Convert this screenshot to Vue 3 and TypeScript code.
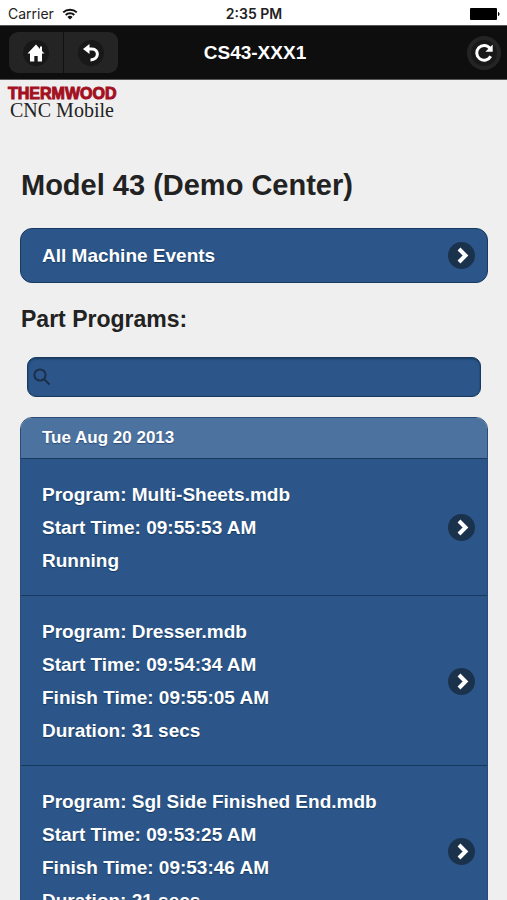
<script setup lang="ts">
import { ref, computed } from 'vue'

interface ProgramRun {
  id: number
  lines: string[]
}

const query = ref('')

const runs: ProgramRun[] = [
  { id: 1, lines: ['Program: Multi-Sheets.mdb', 'Start Time: 09:55:53 AM', 'Running'] },
  {
    id: 2,
    lines: [
      'Program: Dresser.mdb',
      'Start Time: 09:54:34 AM',
      'Finish Time: 09:55:05 AM',
      'Duration: 31 secs',
    ],
  },
  {
    id: 3,
    lines: [
      'Program: Sgl Side Finished End.mdb',
      'Start Time: 09:53:25 AM',
      'Finish Time: 09:53:46 AM',
      'Duration: 21 secs',
    ],
  },
]

const visibleRuns = computed(() => {
  const needle = query.value.trim().toLowerCase()
  return runs.filter((run) => run.lines.join(' ').toLowerCase().includes(needle))
})
</script>

<template>
  <div class="app">
    <div class="status">
      <div class="carrier">
        <span>Carrier</span>
        <svg class="wifi" viewBox="0 0 16 12" aria-hidden="true">
          <path d="M1.2 4.4a9.8 9.8 0 0 1 13.6 0M3.7 7a6.2 6.2 0 0 1 8.6 0" />
          <path class="solid" d="M8 11.6 5.4 9a3.8 3.8 0 0 1 5.2 0z" />
        </svg>
      </div>
      <strong class="clock">2:35 PM</strong>
      <svg class="battery" viewBox="0 0 30 12" aria-hidden="true">
        <rect x="0" y="0" width="27" height="12" rx="1" />
        <path d="M28 4c2 .6 2 3.400 0 4z" />
      </svg>
    </div>

    <header class="bar">
      <div class="group">
        <button type="button" class="nav" aria-label="Home">
          <span class="disc">
            <svg viewBox="0 0 26 26" aria-hidden="true">
              <path class="fill" d="M13 4.500 4.500 13.600H7V21.500h4.300V16h3.400v5.500H19v-7.900h2.500L19 11V6.500h-2V9z" />
            </svg>
          </span>
        </button>
        <button type="button" class="nav" aria-label="Back">
          <span class="disc">
            <svg viewBox="0 0 26 26" aria-hidden="true">
              <path class="fill" d="M5 9 11.500 4v10z" />
              <path class="line" d="M9.500 9h4.500c7.400 0 7.400 10.800-1.500 11" />
            </svg>
          </span>
        </button>
      </div>
      <h1 class="title">CS43-XXX1</h1>
      <button type="button" class="refresh" aria-label="Refresh">
        <svg viewBox="0 0 26 26" aria-hidden="true">
          <path class="line" d="M18.900 8.200A7.400 7.400 0 1 0 19.700 16.300" />
          <path class="fill" d="M21.700 4.500v7.300h-7.300z" />
        </svg>
      </button>
    </header>

    <main class="content">
      <div class="logo">
        <span class="brand">THERMWOOD</span>
        <span class="product">CNC Mobile</span>
      </div>

      <div class="body">
        <h2 class="machine">Model 43 (Demo Center)</h2>

        <a href="#events" class="row events">
          <span>All Machine Events</span>
          <svg class="arrow" viewBox="0 0 27 27" aria-hidden="true">
            <circle cx="13.500" cy="13.500" r="13.500" />
            <path d="m11 7 6.500 6.500-6.500 6.500" />
          </svg>
        </a>

        <h3 class="section">Part Programs:</h3>

        <label class="search">
          <svg viewBox="0 0 18 18" aria-hidden="true">
            <circle cx="7" cy="7" r="5.600" />
            <path d="m11 11 5.500 5.500" />
          </svg>
          <input v-model="query" type="search" aria-label="Filter programs" />
        </label>

        <section class="list">
          <h4 class="date">Tue Aug 20 2013</h4>
          <a v-for="run in visibleRuns" :key="run.id" href="#program" class="row">
            <span class="lines">
              <span v-for="line in run.lines" :key="line">{{ line }}</span>
            </span>
            <svg class="arrow" viewBox="0 0 27 27" aria-hidden="true">
              <circle cx="13.500" cy="13.500" r="13.500" />
              <path d="m11 7 6.500 6.500-6.500 6.500" />
            </svg>
          </a>
        </section>
      </div>
    </main>
  </div>
</template>

<style>
body {
  margin: 0;
  background: #efefef;
}
</style>

<style scoped>
.app {
  display: flex;
  flex-direction: column;
  height: 100vh;
  background: #efefef;
  color: #222;
  font-family: "Liberation Sans", Arial, sans-serif;
}

.status {
  display: grid;
  grid-template-columns: 1fr auto 1fr;
  align-items: center;
  flex: none;
  height: 25px;
  padding: 2px 7px 0 8px;
  box-sizing: border-box;
  background: #fff;
  color: #222;
  font: 14px "Inter", sans-serif;
}

.carrier {
  display: flex;
  align-items: center;
  gap: 8px;
}

.clock {
  font-weight: 600;
}

.wifi {
  width: 16px;
  height: 12px;
  fill: none;
  stroke: #111;
  stroke-width: 2;
}

.wifi .solid {
  fill: #111;
  stroke: none;
}

.battery {
  justify-self: end;
  width: 30px;
  height: 12px;
}

.bar {
  display: grid;
  grid-template-columns: 1fr auto 1fr;
  align-items: center;
  flex: none;
  height: 55px;
  padding: 0 6px 0 9px;
  box-sizing: border-box;
  border-top: 1px solid #555;
  border-bottom: 1px solid #555;
  background: #0e0e0e;
  color: #fff;
}

.group {
  display: flex;
  justify-self: start;
  overflow: hidden;
  border-radius: 9px;
  background: #242424;
}

.nav {
  display: grid;
  place-items: center;
  width: 54px;
  height: 41px;
  padding: 0;
  border: 0;
  background: transparent;
}

.nav + .nav {
  width: 55px;
  border-left: 1px solid #111;
}

.disc {
  display: grid;
  width: 26px;
  height: 26px;
  border-radius: 50%;
  background: #181818;
}

.fill {
  fill: #fff;
}

.line {
  fill: none;
  stroke: #fff;
  stroke-width: 3;
}

.title {
  margin: 0;
  font-size: 19px;
  line-height: 24px;
}

.refresh {
  display: grid;
  place-items: center;
  justify-self: end;
  width: 34px;
  height: 34px;
  padding: 0;
  border: 4px solid #242424;
  border-radius: 50%;
  background: #181818;
}

.refresh svg {
  width: 26px;
  height: 26px;
}

.content {
  flex: 1;
  min-height: 0;
  overflow-y: auto;
  scrollbar-width: none;
}

.logo {
  display: flex;
  flex-direction: column;
  padding: 6px 8px 0;
}

.brand {
  color: #a3101f;
  font-size: 16px;
  font-weight: 700;
  line-height: 16px;
  -webkit-text-stroke: 1px #a3101f;
}

.product {
  padding-left: 2px;
  color: #222;
  font: 20px/16px "Liberation Serif", serif;
}

.body {
  padding: 50px 19px 20px 20px;
}

.machine {
  margin: 0 0 26px;
  padding-left: 1px;
  font-size: 29px;
  line-height: 34px;
}

.row {
  display: flex;
  align-items: center;
  justify-content: space-between;
  padding: 19px 12px 18px 21px;
  border-top: 1px solid #173a5e;
  background: #2c568a;
  color: #fff;
  font-size: 19px;
  font-weight: 700;
  line-height: 33px;
  text-decoration: none;
  text-shadow: 0 1px 1px #173a5e;
}

.events {
  padding-top: 10px;
  padding-bottom: 10px;
  border: 1px solid #173a5e;
  border-radius: 12px;
}

.lines {
  display: flex;
  flex-direction: column;
}

.arrow {
  flex: none;
  width: 27px;
  height: 27px;
  fill: #1b324d;
}

.arrow path {
  fill: none;
  stroke: #fff;
  stroke-width: 4;
}

.section {
  margin: 22px 0 24px;
  padding-left: 1px;
  font-size: 23px;
  line-height: 28px;
}

.search {
  display: flex;
  align-items: center;
  gap: 8px;
  height: 40px;
  margin: 0 7px 20px;
  padding: 0 6px 0 5px;
  box-sizing: border-box;
  border: 1px solid #173a5e;
  border-radius: 9px;
  background: #2c568a;
  box-shadow: inset 0 1px 2px #173a5e;
}

.search svg {
  flex: none;
  width: 18px;
  height: 18px;
  fill: none;
  stroke: #1b2e4a;
  stroke-width: 2;
}

.search input {
  flex: 1;
  min-width: 0;
  padding: 0;
  border: 0;
  outline: 0;
  background: transparent;
  color: #fff;
  font: 700 19px "Liberation Sans", sans-serif;
}

.list {
  overflow: hidden;
  border: 1px solid #2b4c78;
  border-radius: 12px;
}

.date {
  margin: 0;
  padding: 10px 21px;
  background: #4c739f;
  color: #fff;
  font-size: 17px;
  line-height: 20px;
  text-shadow: 0 1px 1px #2b4c78;
}
</style>
